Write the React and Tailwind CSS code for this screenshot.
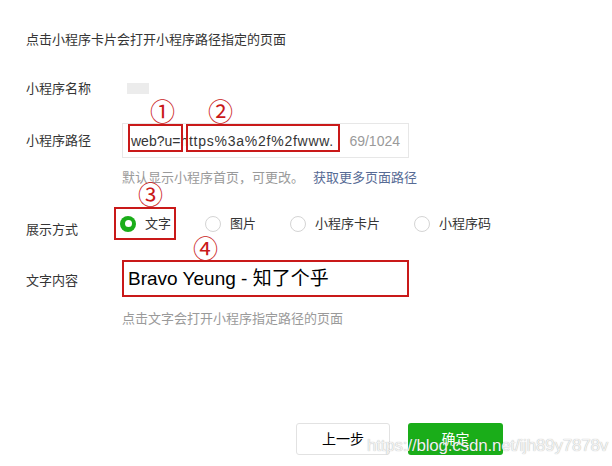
import React from 'react';

const options = [
  { label: '文字', checked: true },
  { label: '图片' },
  { label: '小程序卡片' },
  { label: '小程序码' },
];

const Mark = ({ children, className }) => (
  <span className={`absolute text-[25px] leading-none text-[#c91919] font-['Noto_Sans_CJK_SC',sans-serif] ${className}`}>
    {children}
  </span>
);

const Radio = ({ label, checked }) => (
  <label className="flex items-center gap-[9px]">
    {checked ? (
      <span className="flex h-4 w-4 items-center justify-center rounded-full bg-[#1aad19]">
        <span className="h-[7px] w-[7px] rounded-full bg-white" />
      </span>
    ) : (
      <span className="h-4 w-4 rounded-full border border-[#d4d4d4] bg-white" />
    )}
    <span className="text-[13px] leading-[18px] text-[#353535]">{label}</span>
  </label>
);

export default function App() {
  return (
    <div className="relative h-[466px] w-[612px] overflow-hidden bg-white font-['Liberation_Sans','Noto_Sans_CJK_SC',sans-serif] text-[#353535]">
      <div className="pl-[26px] pt-[31px]">
        <p className="h-[18px] text-[13px] leading-[18px]">点击小程序卡片会打开小程序路径指定的页面</p>

        {/* 名称 */}
        <div className="mt-[31px] flex h-[18px] items-center">
          <span className="w-[96px] text-[13px] leading-[18px]">小程序名称</span>
          <span className="ml-[5px] mt-[-2px] h-[11px] w-[22px] bg-[#ececec]" />
        </div>

        {/* 路径 */}
        <div className="mt-[25px] flex items-center">
          <span className="w-[96px] text-[13px] leading-[18px]">小程序路径</span>
          <div className="relative flex h-[35px] w-[287px] items-center justify-between border border-[#e7e7e7] pl-[8px] pr-[8px]">
            <span className="text-[14px] leading-[20px] text-[#353535]">
              web?u=<span className="tracking-[0.75px]">https%3a%2f%2fwww.</span>
            </span>
            <span className="text-[14px] leading-[20px] text-[#9a9a9a]">69/1024</span>
            <span className="absolute left-[5px] top-0 h-[28px] w-[55px] border-2 border-[#c91919]" />
            <span className="absolute left-[63px] top-0 h-[28px] w-[154px] border-2 border-[#c91919]" />
          </div>
        </div>

        <p className="ml-[96px] mt-[11px] h-[18px] text-[13px] leading-[18px] text-[#9a9a9a]">
          默认显示小程序首页，可更改。<span className="ml-[9px] text-[#576b95]">获取更多页面路径</span>
        </p>

        {/* 展示方式 */}
        <div className="mt-[20px] flex h-[33px] items-start">
          <span className="mt-[14px] w-[96px] text-[13px] leading-[18px]">展示方式</span>
          <div className="ml-[-2px] flex h-[33px] items-center gap-[34px]">
            {options.map((o) => (
              <Radio key={o.label} label={o.label} checked={o.checked} />
            ))}
          </div>
        </div>

        {/* 文字内容 */}
        <div className="mt-[20px] flex items-start">
          <span className="mt-[12px] w-[96px] text-[13px] leading-[18px]">文字内容</span>
          <div className="flex h-[37px] w-[287px] items-center border-2 border-[#c91919] pl-[4px]">
            <span className="text-[19px] leading-[24px] text-black">Bravo Yeung - 知了个乎</span>
          </div>
        </div>

        <p className="ml-[96px] mt-[13px] h-[18px] text-[13px] leading-[18px] text-[#9a9a9a]">点击文字会打开小程序指定路径的页面</p>

        <div className="mt-[95px] flex gap-[18px] pl-[270px]">
          <button className="h-[32px] w-[94px] rounded-[3px] border border-[#e2e2e2] bg-white text-[14px] text-black">上一步</button>
          <button className="h-[32px] w-[95px] rounded-[3px] bg-[#1aad19] text-[14px] text-white">确定</button>
        </div>
      </div>

      {/* annotations */}
      <Mark className="left-[150px] top-[98px]">①</Mark>
      <Mark className="left-[208px] top-[98px]">②</Mark>
      <Mark className="left-[138px] top-[181px]">③</Mark>
      <Mark className="left-[193px] top-[235px]">④</Mark>
      <span className="absolute left-[114px] top-[207px] h-[33px] w-[62px] border-2 border-[#c91919]" />

      <span className="absolute left-[367px] top-[436px] text-[17px] leading-[20px] tracking-[-0.2px] text-[#f2f2f2] [text-shadow:0_0_1px_rgba(0,0,0,0.35)]">
        https://blog.csdn.net/ijh89y7878v
      </span>
    </div>
  );
}
